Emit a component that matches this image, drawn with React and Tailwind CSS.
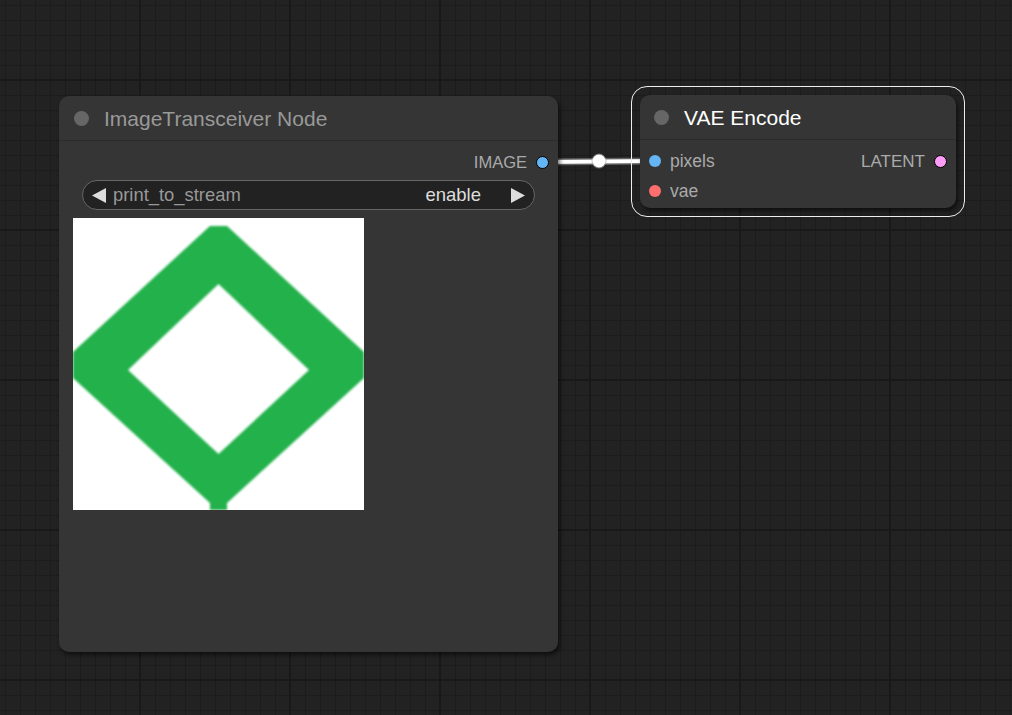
import React from "react"

const FONT = { fontFamily: '"Liberation Sans", Arial, sans-serif' }

function Grid() {
  return (
    <svg className="absolute inset-0 w-full h-full" width="1012" height="715">
      <defs>
        <pattern id="minor" x="5" y="5" width="15" height="15" patternUnits="userSpaceOnUse">
          <rect x="0" y="0" width="15" height="1" fill="#1c1c1c" />
          <rect x="0" y="0" width="1" height="15" fill="#1c1c1c" />
        </pattern>
        <pattern id="major" x="-10" y="-70" width="150" height="150" patternUnits="userSpaceOnUse">
          <rect x="0" y="0" width="150" height="1" fill="#191919" />
          <rect x="0" y="149" width="150" height="1" fill="#191919" />
          <rect x="0" y="0" width="1" height="150" fill="#191919" />
          <rect x="149" y="0" width="1" height="150" fill="#191919" />
        </pattern>
      </defs>
      <rect width="1012" height="715" fill="#222222" />
      <rect width="1012" height="715" fill="url(#minor)" />
      <rect width="1012" height="715" fill="url(#major)" />
    </svg>
  )
}

function Link() {
  return (
    <svg className="absolute inset-0 w-full h-full" width="1012" height="715">
      <path d="M543 162 C 580 162, 617 161, 654 161" stroke="rgba(140,140,140,0.6)" strokeWidth="7" fill="none" />
      <path d="M543 162 C 580 162, 617 161, 654 161" stroke="#ffffff" strokeWidth="4" fill="none" />
      <circle cx="599" cy="161" r="7.5" fill="rgba(160,160,160,0.6)" />
      <circle cx="599" cy="161" r="6.5" fill="#ffffff" />
    </svg>
  )
}

function Dot({ color, ring }) {
  return (
    <span
      className={ring ? "block w-[13px] h-[13px] rounded-full border-[1.5px] border-black" : "block w-[12px] h-[12px] rounded-full"}
      style={{ backgroundColor: color }}
    />
  )
}

function Arrow({ dir }) {
  return (
    <svg width="15" height="15" viewBox="0 0 15 15">
      {dir === "left" ? <polygon points="14,0 14,15 0,7.5" fill="#dddddd" /> : <polygon points="1,0 1,15 15,7.5" fill="#dddddd" />}
    </svg>
  )
}

function Diamond() {
  return (
    <svg width="291" height="292" viewBox="0 0 291 292" className="block">
      <defs>
        <filter id="soft">
          <feGaussianBlur stdDeviation="0.9" />
        </filter>
      </defs>
      <rect width="291" height="292" fill="#ffffff" />
      <path
        fillRule="evenodd"
        filter="url(#soft)"
        fill="#22b14c"
        d="M137 8 L154 8 L291 134 L291 160 L154 285 L154 292 L137 292 L137 285 L0 160 L0 134 Z M145.5 66 L236 152 L145.5 236 L55 152 Z"
      />
    </svg>
  )
}

function TransceiverNode() {
  return (
    <div className="absolute left-[59px] top-[96px] w-[499px] h-[556px] rounded-[10px] bg-[#353535] shadow-[2px_3px_4px_rgba(0,0,0,0.55)] flex flex-col">
      <div className="h-[45px] flex items-center pl-[15px] border-b border-[#2b2b2b]">
        <span className="block w-[15px] h-[15px] rounded-full bg-[#666]" />
        <span className="ml-[15px] pt-[2px] text-[21px] text-[#999]">ImageTransceiver Node</span>
      </div>
      <div className="flex flex-col pt-[6px]">
        <div className="h-[30px] flex items-center justify-end pr-[9px] gap-[9px]">
          <span className="pt-[1px] text-[16.5px] text-[#aaa]">IMAGE</span>
          <Dot color="#64b5f6" ring />
        </div>
        <div className="mt-[3px] mx-[23px] h-[30px] rounded-full bg-[#222] border border-[#666] flex items-center px-[9px]">
          <Arrow dir="left" />
          <span className="ml-[6px] text-[18.4px] text-[#999]">print_to_stream</span>
          <span className="ml-auto text-[18.5px] text-[#ddd]">enable</span>
          <span className="ml-[29px]">
            <Arrow dir="right" />
          </span>
        </div>
        <div className="mt-[8px] ml-[14px]">
          <Diamond />
        </div>
      </div>
    </div>
  )
}

function VaeNode() {
  return (
    <div className="absolute left-[640px] top-[95px] w-[316px] h-[113px]">
      <div className="absolute -inset-[9px] rounded-[16px] border-[1.5px] border-[#eeeeee]" />
      <div className="relative w-full h-full rounded-[10px] bg-[#353535] shadow-[2px_3px_4px_rgba(0,0,0,0.55)] flex flex-col">
        <div className="h-[45px] flex items-center pl-[14px] border-b border-[#2b2b2b]">
          <span className="block w-[15px] h-[15px] rounded-full bg-[#666]" />
          <span className="ml-[15px] pt-[1px] text-[21px] text-white">VAE Encode</span>
        </div>
        <div className="flex flex-col pt-[6px]">
          <div className="h-[30px] flex items-center pl-[9px] pr-[9px]">
            <Dot color="#64b5f6" />
            <span className="ml-[9px] pt-[1px] text-[17.5px] text-[#aaa]">pixels</span>
            <span className="ml-auto pt-[1px] text-[17px] text-[#aaa]">LATENT</span>
            <span className="ml-[9px]">
              <Dot color="#ff9cf9" ring />
            </span>
          </div>
          <div className="h-[30px] flex items-center pl-[9px]">
            <Dot color="#ff6e6e" />
            <span className="ml-[9px] pt-[1px] text-[17.5px] text-[#aaa]">vae</span>
          </div>
        </div>
      </div>
    </div>
  )
}

export default function App() {
  return (
    <div className="relative w-[1012px] h-[715px] overflow-hidden bg-[#222]" style={FONT}>
      <Grid />
      <Link />
      <TransceiverNode />
      <VaeNode />
    </div>
  )
}
